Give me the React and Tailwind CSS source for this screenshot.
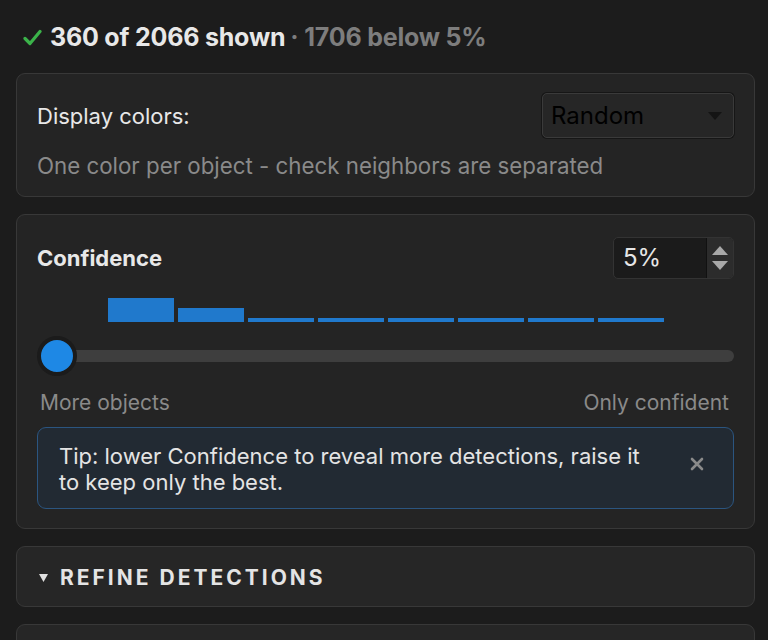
import React from "react";

export default function App() {
  const bars = [24, 14, 4, 4, 4, 4, 4, 4];
  return (
    <div className="h-screen overflow-hidden bg-[#1c1c1c] pl-4 pr-[13px] pt-[22px] font-['Inter',sans-serif] text-[#e6e6e6]">
      <div className="flex h-[30px] items-center text-[25px] font-bold leading-[30px] tracking-[-0.2px]">
        <svg width="19" height="17" viewBox="0 0 19 17" className="ml-[7px] mr-[8px]">
          <path d="M2 9.5 L7 14.5 L17 2.5" fill="none" stroke="#3bb34a" strokeWidth="3.2" strokeLinecap="round" strokeLinejoin="round" />
        </svg>
        <span className="text-[#e8e8e8]">360 of 2066 shown</span>
        <span className="ml-[5px] text-[#7d7d7d]">· 1706 below 5%</span>
      </div>

      <div className="mt-[21px] rounded-[9px] border border-[#383838] bg-[#242424] pl-[20px] pr-[20px] pt-[19px] pb-[16px]">
        <div className="flex items-center justify-between">
          <span className="text-[22px] leading-[28px] text-[#e8e8e8]">Display colors:</span>
          <div className="flex h-[45px] w-[192px] items-center justify-between rounded-[5px] border border-[#3a3a3a] bg-[#262626] pl-[8px] pr-[11px] shadow-[0_0_0_1px_#161616]">
            <span className="text-[24px] leading-[28px] text-[#000000]">Random</span>
            <svg width="14" height="8" viewBox="0 0 14 8">
              <path d="M0 0 H14 L7 8 Z" fill="#141414" />
            </svg>
          </div>
        </div>
        <div className="mt-[14px] text-[22.3px] leading-[28px] text-[#8a8a8a]">
          One color per object - check neighbors are separated
        </div>
      </div>

      <div className="mt-[17px] rounded-[9px] border border-[#383838] bg-[#242424] pl-[20px] pr-[20px] pt-[22px] pb-[19px]">
        <div className="flex items-center justify-between">
          <span className="text-[22px] font-bold leading-[28px] text-[#e8e8e8]">Confidence</span>
          <div className="flex h-[42px] w-[121px] items-stretch overflow-hidden rounded-[5px] border border-[#333] bg-[#1b1b1b]">
            <div className="flex flex-1 items-center pl-[9px] text-[24px] leading-[28px] text-[#e6e6e6]">5%</div>
            <div className="flex w-[27px] flex-col items-center justify-center gap-[6px] border-l border-[#111] bg-[#2c2c2c]">
              <svg width="16" height="9" viewBox="0 0 16 9"><path d="M8 0 L16 9 H0 Z" fill="#a8a8a8" /></svg>
              <svg width="16" height="9" viewBox="0 0 16 9"><path d="M0 0 H16 L8 9 Z" fill="#a8a8a8" /></svg>
            </div>
          </div>
        </div>

        <div className="mt-[19px] flex h-[24px] items-end gap-[4px] pl-[71px]">
          {bars.map((h, i) => (
            <div key={i} className="w-[66px] bg-[#2079cc]" style={{ height: h }} />
          ))}
        </div>

        <div className="relative mt-[14px] flex h-[40px] items-center">
          <div className="ml-[3px] h-[12px] flex-1 rounded-full bg-[#3e3e3e]" />
          <div className="absolute left-0 top-0 h-[40px] w-[40px] rounded-full border-[4px] border-[#1b1b1b] bg-[#1e88e5]" />
        </div>

        <div className="mt-[15px] flex justify-between pl-[3px] pr-[5px] text-[21px] leading-[24px] text-[#8a8a8a]">
          <span>More objects</span>
          <span>Only confident</span>
        </div>

        <div className="mt-[12px] flex items-start justify-between rounded-[9px] border border-[#2b5580] bg-[#222a33] pl-[21px] pr-[29px] pt-[15px] pb-[13px]">
          <div className="w-[600px] text-[22px] leading-[26px] text-[#e4e4e4]">
            Tip: lower Confidence to reveal more detections, raise it to keep only the best.
          </div>
          <svg width="14" height="14" viewBox="0 0 14 14" className="mt-[14px]">
            <path d="M2 2 L12 12 M12 2 L2 12" stroke="#8a8a8a" strokeWidth="2.6" strokeLinecap="round" />
          </svg>
        </div>
      </div>

      <div className="mt-[17px] flex h-[61px] items-center rounded-[9px] border border-[#383838] bg-[#262626] pl-[22px]">
        <svg width="9" height="8" viewBox="0 0 9 8" className="mr-[12px] mt-[2px]">
          <path d="M0 0 H9 L4.5 8 Z" fill="#e0e0e0" />
        </svg>
        <span className="mt-[2px] text-[21px] font-bold leading-[28px] tracking-[3px] text-[#e4e4e4]">REFINE DETECTIONS</span>
      </div>

      <div className="mt-[17px] h-[60px] rounded-[9px] border border-[#383838] bg-[#262626]" />
    </div>
  );
}
